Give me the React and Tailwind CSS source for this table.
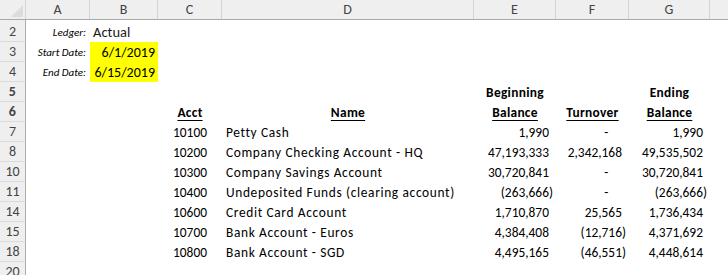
import React from "react";

const FONT = { fontFamily: "Carlito, Lato, 'Open Sans', sans-serif" };

const W = ["w-[64px]", "w-[68px]", "w-[64px]", "w-[252px]", "w-[82px]", "w-[73px]", "w-[81px]"];
const LETTERS = ["A", "B", "C", "D", "E", "F", "G"];

function RowHead({ n, h }) {
  return (
    <div className={`${h} w-[26px] shrink-0 bg-[#efefef] border-r border-r-[#ababab] border-b border-b-[#dadada] flex items-end justify-center leading-none pb-[2px] text-[14px] text-[#444]`}>
      {n}
    </div>
  );
}

function Num({ v, dash }) {
  if (dash) {
    return (
      <span>
        -<span className="invisible">00)</span>
      </span>
    );
  }
  if (v.startsWith("(")) return <span>{v}</span>;
  return (
    <span>
      {v}
      <span className="invisible">)</span>
    </span>
  );
}

const data = [
  [7, "10100", "Petty Cash", "1,990", "-", "1,990"],
  [8, "10200", "Company Checking Account - HQ", "47,193,333", "2,342,168", "49,535,502"],
  [10, "10300", "Company Savings Account", "30,720,841", "-", "30,720,841"],
  [11, "10400", "Undeposited Funds (clearing account)", "(263,666)", "-", "(263,666)"],
  [14, "10600", "Credit Card Account", "1,710,870", "25,565", "1,736,434"],
  [15, "10700", "Bank Account - Euros", "4,384,408", "(12,716)", "4,371,692"],
  [18, "10800", "Bank Account - SGD", "4,495,165", "(46,551)", "4,448,614"],
];

const cell = "shrink-0 flex items-end leading-none pb-[2.5px]";

function NumCell({ w, v }) {
  return (
    <div className={`${w} ${cell} justify-end pr-[3px]`}>
      <Num v={v} dash={v === "-"} />
    </div>
  );
}

export default function App() {
  return (
    <div className="w-[728px] h-[275px] overflow-hidden bg-white text-black" style={FONT}>
      {/* column header */}
      <div className="flex h-[20px] bg-[#efefef] border-b border-b-[#ababab]">
        <div className="w-[26px] shrink-0 border-r border-r-[#d4d4d4] relative">
          <svg className="absolute left-[11px] top-[5px]" width="12" height="12" viewBox="0 0 12 12">
            <polygon points="12,0 12,12 0,12" fill="#dcdcdc" />
          </svg>
        </div>
        {LETTERS.map((l, i) => (
          <div key={l} className={`${W[i]} shrink-0 border-r border-r-[#d4d4d4] flex items-center justify-center text-[14px] text-[#444]`}>
            {l}
          </div>
        ))}
        <div className="flex-1" />
      </div>

      {/* row 2 */}
      <div className="flex h-[22px]">
        <RowHead n={2} h="h-[22px]" />
        <div className={`${W[0]} shrink-0 flex items-end justify-end leading-none pr-[4px] pb-[4px] text-[11px] italic`}>Ledger:</div>
        <div className={`${W[1]} shrink-0 flex items-end leading-none pl-[3px] pb-[2.5px] text-[14.5px] text-[#1a1a1a]`}>Actual</div>
      </div>
      {/* row 3 */}
      <div className="flex h-[20px]">
        <RowHead n={3} h="h-[20px]" />
        <div className={`${W[0]} shrink-0 flex items-end justify-end leading-none pr-[4px] pb-[4px] text-[11px] italic`}>Start Date:</div>
        <div className={`${W[1]} shrink-0 flex items-end justify-end leading-none pr-[3px] pb-[2.5px] text-[14px] bg-[#ffff00]`}>6/1/2019</div>
      </div>
      {/* row 4 */}
      <div className="flex h-[20px]">
        <RowHead n={4} h="h-[20px]" />
        <div className={`${W[0]} shrink-0 flex items-end justify-end leading-none pr-[4px] pb-[4px] text-[11px] italic`}>End Date:</div>
        <div className={`${W[1]} shrink-0 flex items-end justify-end leading-none pr-[3px] pb-[2.5px] text-[14px] bg-[#ffff00]`}>6/15/2019</div>
      </div>
      {/* row 5 */}
      <div className="flex h-[20px] text-[13.4px] font-bold tracking-[0.3px]">
        <RowHead n={5} h="h-[20px]" />
        <div className={`${W[0]} shrink-0`} />
        <div className={`${W[1]} shrink-0`} />
        <div className={`${W[2]} shrink-0`} />
        <div className={`${W[3]} shrink-0`} />
        <div className={`${W[4]} ${cell} justify-center`}>Beginning</div>
        <div className={`${W[5]} shrink-0`} />
        <div className={`${W[6]} ${cell} justify-center`}>Ending</div>
      </div>
      {/* row 6 */}
      <div className="flex h-[20px] text-[13.4px] font-bold tracking-[0.3px]">
        <RowHead n={6} h="h-[20px]" />
        <div className={`${W[0]} shrink-0`} />
        <div className={`${W[1]} shrink-0`} />
        <div className={`${W[2]} ${cell} justify-center`}><span className="underline underline-offset-[3px]">Acct</span></div>
        <div className={`${W[3]} ${cell} justify-center`}><span className="underline underline-offset-[3px]">Name</span></div>
        <div className={`${W[4]} ${cell} justify-center`}><span className="underline underline-offset-[3px]">Balance</span></div>
        <div className={`${W[5]} ${cell} justify-center`}><span className="underline underline-offset-[3px]">Turnover</span></div>
        <div className={`${W[6]} ${cell} justify-center`}><span className="underline underline-offset-[3px]">Balance</span></div>
      </div>
      {data.map(([n, acct, name, b, t, e]) => (
        <div key={n} className="flex h-[20px] text-[13.4px]">
          <RowHead n={n} h="h-[20px]" />
          <div className={`${W[0]} shrink-0`} />
          <div className={`${W[1]} shrink-0`} />
          <div className={`${W[2]} ${cell} justify-center`}>{acct}</div>
          <div className={`${W[3]} ${cell} pl-[4px] whitespace-nowrap tracking-[0.65px]`}>{name}</div>
          <NumCell w={W[4]} v={b} />
          <NumCell w={W[5]} v={t} />
          <NumCell w={W[6]} v={e} />
        </div>
      ))}
      <div className="flex h-[20px]">
        <RowHead n={20} h="h-[20px]" />
      </div>
    </div>
  );
}
